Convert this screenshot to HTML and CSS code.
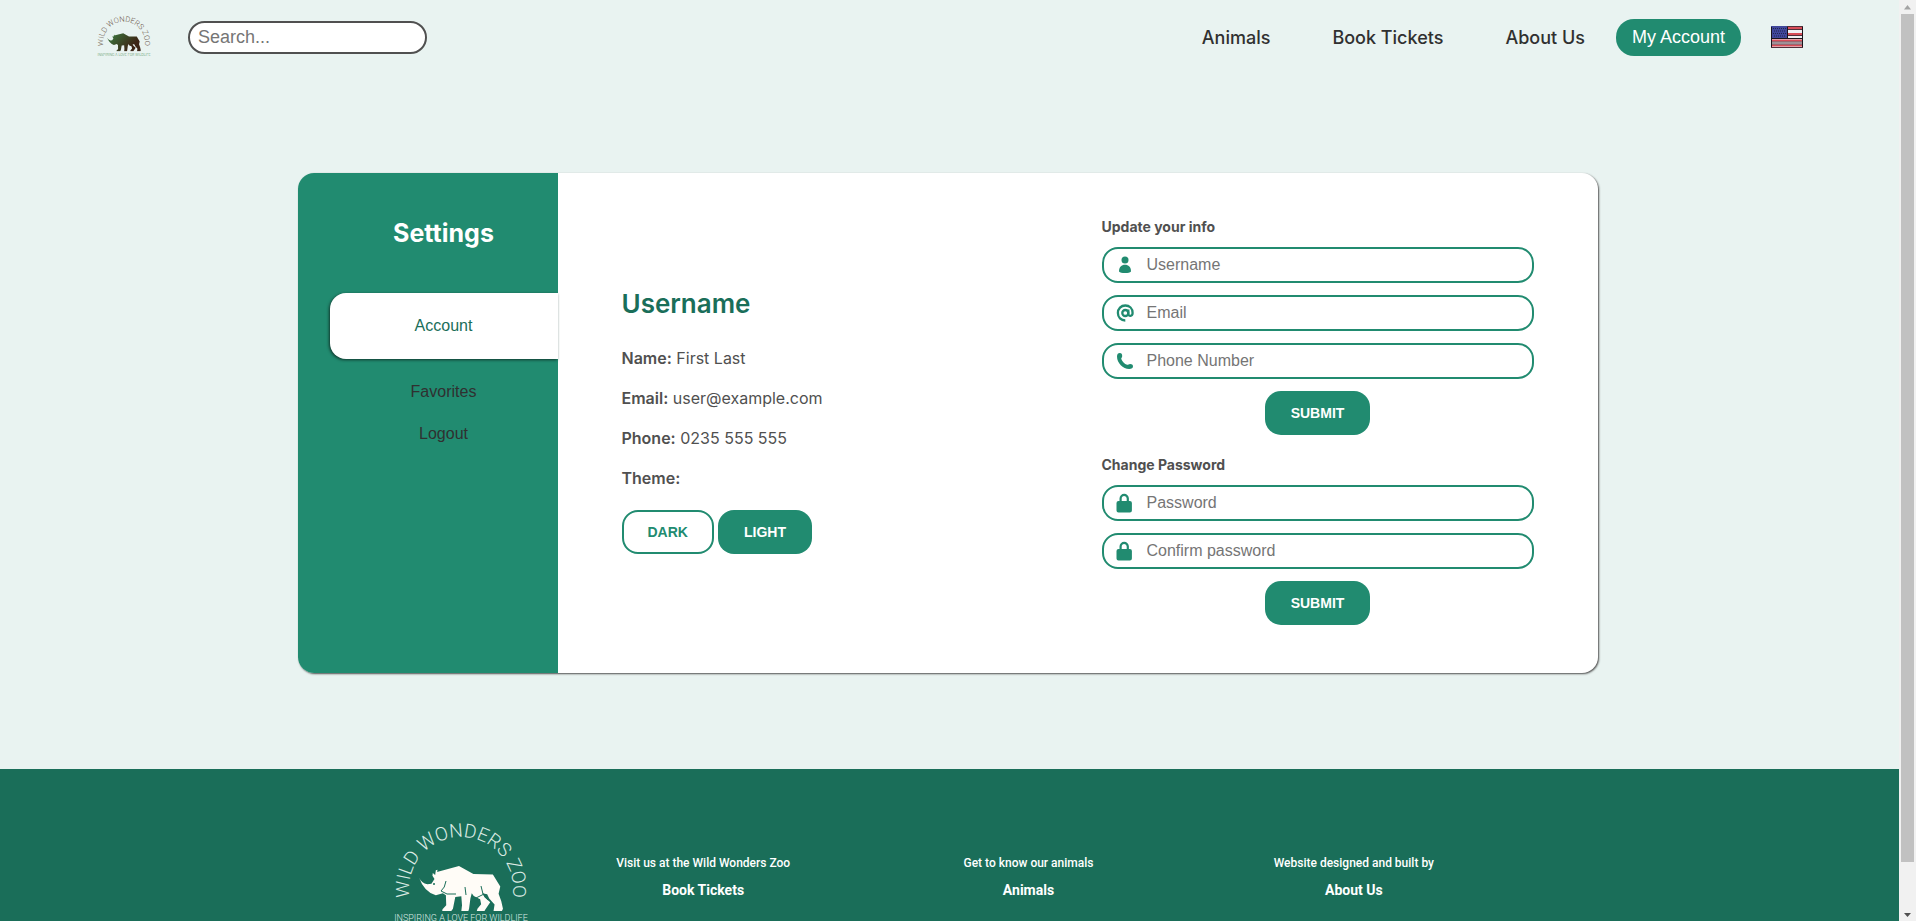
FILE: index.html
```html
<!DOCTYPE html>
<html lang="en">
<head>
<meta charset="utf-8">
<title>Wild Wonders Zoo - My Account</title>
<link rel="stylesheet" href="styles.css">
</head>
<body>
<svg class="defs" aria-hidden="true">
  <defs>
    <linearGradient id="hide" x1="0" y1="0" x2="1" y2="0.5">
      <stop offset="0.2" stop-color="#3b6b38"/>
      <stop offset="0.9" stop-color="#3d2415"/>
    </linearGradient>
    <path id="arc" d="M18 82 L18 66 A52 52 0 0 1 122 66 L122 82"/>
    <symbol id="rhino" viewBox="0 0 260 140">
      <path d="M5 37 Q12 54 30 57 L42 56 L51 42 L45 32 L46 24 L53 30 L55 16 L60 14 L59 21 L64 19 L124 3 L167 27 L225 28 L247 64 L242 86 L250 108 L255 130 L252 137 L227 137 L230 118 L214 100 L208 87 L194 84 L200 96 L217 111 L202 133 L200 137 L177 137 L179 130 L190 117 L187 102 L168 92 L162 84 L158 100 L154 130 L152 137 L131 137 L133 120 L131 93 L113 95 L106 130 L101 137 L74 137 L75 132 L86 120 L85 90 L76 84 L55 90 Q20 80 5 37 Z"/>
    </symbol>
  </defs>
</svg>
<div class="window">
  <div class="page">
    <header class="header">
      <a href="#" class="brand" aria-label="Wild Wonders Zoo">
        <svg class="logo logo-small" viewBox="0 0 140 104">
          <text class="logo-name"><textPath href="#arc" startOffset="50%">WILD WONDERS ZOO</textPath></text>
          <use href="#rhino" x="26" y="42" width="88" height="47"/>
          <text class="logo-tag" x="70" y="99">INSPIRING A LOVE FOR WILDLIFE</text>
        </svg>
      </a>
      <input class="search" type="search" placeholder="Search..." aria-label="Search">
      <nav class="nav">
        <a class="nav-link" href="#">Animals</a>
        <a class="nav-link" href="#">Book Tickets</a>
        <a class="nav-link" href="#">About Us</a>
        <a class="nav-account" href="#">My Account</a>
        <button class="flag" type="button" aria-label="Language: English">
          <svg viewBox="0 0 32 22">
            <rect width="32" height="22" rx="1" fill="#eef0f4"/>
            <path d="M0 2h32M0 8h32M0 14.5h32M0 19.5h32" stroke="#d84c58" stroke-width="2"/>
            <path d="M0 .5h32M16 3.500h16M16 9.500h16M0 16h32M0 18h32M0 21.5h32" stroke="#51303a"/>
            <rect width="16" height="12" fill="#41479b"/>
            <path d="M2 2.5h13M3 5h12M2 7.500h13M3 10h12" stroke="#22244f" stroke-width="1" stroke-dasharray="1 1"/>
            <path d="M16.500 1v11M0 12.500h32M.5 1v20M31.500 1v20" stroke="#1a141c" fill="none"/>
          </svg>
        </button>
      </nav>
    </header>

    <main class="main">
      <div class="card">
        <aside class="sidebar">
          <h2 class="sidebar-title">Settings</h2>
          <a class="tab tab-active" href="#">Account</a>
          <a class="tab" href="#">Favorites</a>
          <a class="tab" href="#">Logout</a>
        </aside>
        <section class="profile">
          <h1 class="profile-name">Username</h1>
          <p class="fact"><b>Name:</b> First Last</p>
          <p class="fact"><b>Email:</b> user@example.com</p>
          <p class="fact"><b>Phone:</b> 0235 555 555</p>
          <p class="fact"><b>Theme:</b></p>
          <div class="themes">
            <button class="btn btn-outline" type="button">DARK</button>
            <button class="btn" type="button">LIGHT</button>
          </div>
        </section>
        <section class="forms">
          <form class="form">
            <h3 class="form-title">Update your info</h3>
            <label class="field">
              <svg class="icon" viewBox="0 0 20 20"><circle cx="10" cy="5" r="3.500"/><path d="M4 16.500C4 12 6.500 9.800 10 9.800s6 2.200 6 6.700q-1.500 1.500-6 1.500t-6-1.500z"/></svg>
              <input type="text" placeholder="Username" aria-label="Username">
            </label>
            <label class="field">
              <svg class="icon" viewBox="0 0 20 20"><g fill="none" stroke="currentColor" stroke-width="2.300"><circle cx="10.300" cy="10" r="3"/><path d="M13.300 6.500v4.300c0 2.800 4.300 2.800 4.300-.8 0-4.500-3.100-7.500-7.300-7.500-4.300 0-7.400 3.200-7.400 7.500s3.100 7.500 7.400 7.500" /></g></svg>
              <input type="email" placeholder="Email" aria-label="Email">
            </label>
            <label class="field">
              <svg class="icon" viewBox="0 0 20 20"><path d="M2 5.500C2 3 3.200 2 4.800 2 6.500 2 7.200 3.300 7.200 5c0 1.500-1.200 2-.9 3 .8 2.500 3.200 5 5.800 5.800 1 .3 1.500-.9 3-.9 1.700 0 2.900.8 2.900 2.300 0 1.700-1.300 2.800-3.800 2.800C8 18 2 12 2 5.500z"/></svg>
              <input type="tel" placeholder="Phone Number" aria-label="Phone Number">
            </label>
            <button class="btn btn-submit" type="button">SUBMIT</button>
          </form>
          <form class="form">
            <h3 class="form-title">Change Password</h3>
            <label class="field">
              <svg class="icon" viewBox="0 0 20 20"><path d="M3.500 8h1V5.500a4.700 4.700 0 0 1 9.400 0V8h1q2 0 2 2v7.500q0 2-2 2h-11.400q-2 0-2-2V10q0-2 2-2zm3.200 0h5V5.500a2.500 2.500 0 0 0-5 0z"/></svg>
              <input type="password" placeholder="Password" aria-label="Password">
            </label>
            <label class="field">
              <svg class="icon" viewBox="0 0 20 20"><path d="M3.500 8h1V5.500a4.700 4.700 0 0 1 9.400 0V8h1q2 0 2 2v7.500q0 2-2 2h-11.400q-2 0-2-2V10q0-2 2-2zm3.200 0h5V5.500a2.500 2.500 0 0 0-5 0z"/></svg>
              <input type="password" placeholder="Confirm password" aria-label="Confirm password">
            </label>
            <button class="btn btn-submit" type="button">SUBMIT</button>
          </form>
        </section>
      </div>
    </main>

    <footer class="footer">
      <div class="footer-inner">
        <svg class="logo logo-large" viewBox="0 0 140 104" role="img" aria-label="Wild Wonders Zoo">
          <text class="logo-name"><textPath href="#arc" startOffset="50%">WILD WONDERS ZOO</textPath></text>
          <use href="#rhino" x="26" y="42" width="88" height="47"/>
          <path class="logo-seam" d="M55 58q-1 7-5 10l6 3h9M93 71l-8 4M90 63l2 8 5 6M75 72l-1-8"/>
          <circle class="logo-eye" cx="43" cy="61" r="1"/>
          <text class="logo-tag" x="70" y="98">INSPIRING A LOVE FOR WILDLIFE</text>
        </svg>
        <div class="footer-col"><p>Visit us at the Wild Wonders Zoo</p><a href="#">Book Tickets</a></div>
        <div class="footer-col"><p>Get to know our animals</p><a href="#">Animals</a></div>
        <div class="footer-col"><p>Website designed and built by</p><a href="#">About Us</a></div>
      </div>
    </footer>
  </div>
  <div class="scrollbar" aria-hidden="true">
    <svg class="scroll-arrow" viewBox="0 0 17 14"><path d="M5 9.500h7L8.500 5z" fill="#a3a3a3"/></svg>
    <div class="scroll-thumb"></div>
    <svg class="scroll-arrow" viewBox="0 0 17 14"><path d="M5 6h7l-3.500 4z" fill="#505050"/></svg>
  </div>
</div>
</body>
</html>
```
FILE: styles.css
```css
* { box-sizing: border-box; }

body {
  margin: 0;
  font-family: Inter, Roboto, sans-serif;
  color: #505050;
  background: #e9f3f1;
}

h1, h2, h3, p { margin: 0; }
a { text-decoration: none; color: inherit; }

.defs { position: absolute; width: 0; height: 0; }

.window { display: flex; height: 100vh; overflow: hidden; }
.page { flex: 1; min-width: 0; overflow: hidden; }

.header {
  display: flex;
  align-items: center;
  height: 74px;
  padding: 0 96px;
}
.brand { display: flex; margin-right: 36px; }

.logo { display: block; overflow: visible; }
.logo-small { width: 56px; fill: url(#hide); }
.logo-large { width: 140px; fill: #fffcf7; }
.logo-name {
  font: 300 19px Roboto, sans-serif;
  text-anchor: middle;
}
.logo-tag { font: 300 9px Roboto, sans-serif; text-anchor: middle; }
.logo-small .logo-name { fill: #6b5648; }
.logo-small .logo-tag { fill: #4f8f5a; }
.logo-large .logo-name, .logo-large .logo-tag { fill: #dcebe4; }
.logo-seam { fill: none; stroke: #1a6e59; stroke-width: 1; }
.logo-eye { fill: #1a6e59; }

.search {
  width: 239px;
  height: 33px;
  padding: 0 8px;
  border: 2px solid #505050;
  border-radius: 17px;
  background: #fff;
  font: 18px "Liberation Sans", sans-serif;
}
.search::placeholder, .field input::placeholder { color: #757575; }

.nav { display: flex; align-items: center; margin-left: auto; }
.nav-link { padding: 0 31px; font-size: 18px; font-weight: 500; color: #303030; }
.nav-account {
  padding: 8px 16px;
  border-radius: 18px;
  background: #218b70;
  color: #fff;
  font: 18px/21px "Liberation Sans", sans-serif;
}
.flag {
  display: block;
  width: 32px;
  height: 22px;
  margin-left: 30px;
  padding: 0;
  border: 0;
  background: none;
}
.flag svg { display: block; }

.main { padding: 99px 4px 96px 0; }
.card {
  display: grid;
  grid-template-columns: 260px 544px 1fr;
  max-width: 1300px;
  min-height: 500px;
  margin: 0 auto;
  border-radius: 16px;
  background: #fff;
  box-shadow: 1px 1px 2px #505050;
  overflow: hidden;
}

.sidebar {
  display: flex;
  flex-direction: column;
  padding: 44px 0 0 32px;
  background: #218b70;
  text-align: center;
}
.sidebar-title { margin-bottom: 44px; font-size: 25px; line-height: 32px; color: #fff; }
.tab { padding: 12px 0; font: 16px/18px "Liberation Sans", sans-serif; color: #303030; }
.tab-active {
  margin-bottom: 12px;
  padding: 24px 0;
  border-radius: 16px 0 0 16px;
  background: #fff;
  box-shadow: -1px 1px 3px #10372d;
  color: #1a6e59;
}

.profile {
  display: flex;
  flex-direction: column;
  justify-content: center;
  padding: 0 0 4px 64px;
}
.profile-name { margin-bottom: 28px; font-size: 26px; line-height: 32px; font-weight: 600; color: #1a6e59; }
.fact { margin-bottom: 20px; font-size: 16px; line-height: 20px; }
.fact b { font-weight: 600; }
.themes { display: flex; gap: 4px; padding-top: 2px; }

.btn {
  height: 44px;
  padding: 0 26px;
  border: 0;
  border-radius: 16px;
  background: #218b70;
  color: #fff;
  font: bold 14px "Liberation Sans", sans-serif;
}
.btn-outline {
  padding: 0 24px;
  border: 2px solid #218b70;
  background: #fff;
  color: #218b70;
}
.btn-submit { align-self: center; }

.forms {
  display: flex;
  flex-direction: column;
  justify-content: center;
  gap: 22px;
  padding: 0 64px 2px 0;
}
.form { display: flex; flex-direction: column; gap: 12px; }
.form-title { font-size: 14px; line-height: 16px; font-weight: 700; }
.field {
  display: flex;
  align-items: center;
  gap: 12px;
  height: 36px;
  padding: 0 11px;
  border: 2px solid #218b70;
  border-radius: 16px;
  color: #218b70;
}
.icon { width: 20px; height: 20px; fill: currentColor; }
.field input {
  flex: 1;
  min-width: 0;
  padding: 0;
  border: 0;
  outline: 0;
  background: none;
  font: 16px "Liberation Sans", sans-serif;
}

.footer { padding: 54px 2px 64px 0; background: #1a6e59; color: #fff; }
.footer-inner {
  display: grid;
  grid-template-columns: 160px repeat(3, 1fr);
  max-width: 1136px;
  margin: 0 auto;
  font-family: Roboto, sans-serif;
}
.logo-large { margin: 0 auto; }
.footer-col { padding-top: 32px; text-align: center; }
.footer-col p { margin-bottom: 10px; font-size: 12px; line-height: 16px; font-weight: 500; }
.footer-col a { display: block; font-size: 14px; line-height: 18px; font-weight: 700; }

.scrollbar { display: flex; flex-direction: column; width: 17px; background: #f1f1f1; }
.scroll-arrow { display: block; width: 17px; height: 14px; }
.scroll-thumb { height: 848px; margin: 0 2px; background: #c1c1c1; }
.scroll-arrow:last-child { margin-top: auto; }
```
